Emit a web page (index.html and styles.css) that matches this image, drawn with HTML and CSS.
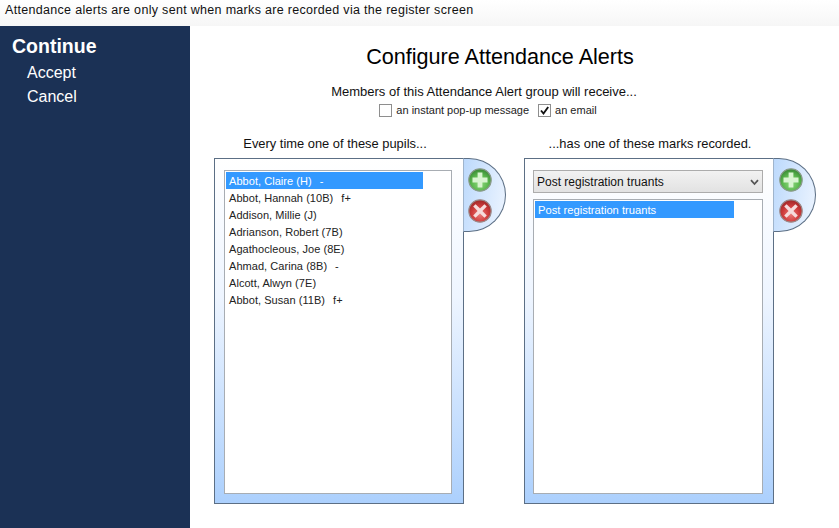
FILE: index.html
```html
<!DOCTYPE html>
<html lang="en">
<head>
<meta charset="utf-8">
<title>Configure Attendance Alerts</title>
<link rel="stylesheet" href="styles.css">
</head>
<body>
<svg class="defs" width="0" height="0" aria-hidden="true">
  <defs>
    <radialGradient id="green" cx="50%" cy="65%" r="60%"><stop offset="0" stop-color="#8fd97f"/><stop offset="0.6" stop-color="#5cb84f"/><stop offset="1" stop-color="#3c8f38"/></radialGradient>
    <radialGradient id="red" cx="50%" cy="65%" r="60%"><stop offset="0" stop-color="#ea7a78"/><stop offset="0.6" stop-color="#cf3d3d"/><stop offset="1" stop-color="#a52a2a"/></radialGradient>
    <symbol id="add" viewBox="0 0 24 24"><circle cx="12" cy="12" r="11.2" fill="url(#green)" stroke="#8a9a8a" stroke-width="1.2"/><path d="M9.6 4.5h4.8v5.1h5.1v4.8h-5.1v5.1H9.6v-5.1H4.5V9.6h5.1z" fill="#d8f4d0"/></symbol>
    <symbol id="remove" viewBox="0 0 24 24"><circle cx="12" cy="12" r="11.2" fill="url(#red)" stroke="#9a8a8a" stroke-width="1.2"/><path d="M7.6 5.2 12 9.6l4.4-4.4 2.4 2.4-4.4 4.4 4.4 4.4-2.4 2.4-4.4-4.4-4.4 4.4-2.4-2.4 4.4-4.4-4.4-4.4z" fill="#f6dcdc"/></symbol>
  </defs>
</svg>
<header class="topbar">Attendance alerts are only sent when marks are recorded via the register screen</header>
<div class="layout">
  <nav class="sidebar">
    <div class="nav-head">Continue</div>
    <div class="nav-item">Accept</div>
    <div class="nav-item">Cancel</div>
  </nav>
  <main class="content">
    <h1 class="title">Configure Attendance Alerts</h1>
    <p class="lead">Members of this Attendance Alert group will receive...</p>
    <div class="options">
      <label class="option"><span class="check"></span>an instant pop-up message</label>
      <label class="option"><span class="check"><svg viewBox="0 0 13 13" width="13" height="13"><path d="M3 6.5 5.5 9.5 10.2 3" fill="none" stroke="#111" stroke-width="1.9"/></svg></span>an email</label>
    </div>
    <div class="columns">
      <section class="column">
        <h2 class="col-head col-head-a">Every time one of these pupils...</h2>
        <div class="panel-wrap">
          <div class="panel">
            <ul class="list">
              <li class="row selected"><span>Abbot, Claire (H)</span><span class="mark">-</span></li>
              <li class="row"><span>Abbot, Hannah (10B)</span><span class="mark">f+</span></li>
              <li class="row"><span>Addison, Millie (J)</span></li>
              <li class="row"><span>Adrianson, Robert (7B)</span></li>
              <li class="row"><span>Agathocleous, Joe (8E)</span></li>
              <li class="row"><span>Ahmad, Carina (8B)</span><span class="mark">-</span></li>
              <li class="row"><span>Alcott, Alwyn (7E)</span></li>
              <li class="row"><span>Abbot, Susan (11B)</span><span class="mark">f+</span></li>
            </ul>
          </div>
          <div class="tab">
            <svg class="btn" width="24" height="24"><use href="#add"/></svg>
            <svg class="btn" width="24" height="24"><use href="#remove"/></svg>
          </div>
        </div>
      </section>
      <section class="column">
        <h2 class="col-head col-head-b">...has one of these marks recorded.</h2>
        <div class="panel-wrap">
          <div class="panel panel-b">
            <div class="select">
              <span>Post registration truants</span>
              <svg width="9" height="7" viewBox="0 0 9 7"><path d="M1 1.2 4.5 5 8 1.2" fill="none" stroke="#555" stroke-width="1.8"/></svg>
            </div>
            <ul class="list list-b">
              <li class="row selected"><span>Post registration truants</span></li>
            </ul>
          </div>
          <div class="tab tab-b">
            <svg class="btn" width="24" height="24"><use href="#add"/></svg>
            <svg class="btn" width="24" height="24"><use href="#remove"/></svg>
          </div>
        </div>
      </section>
    </div>
  </main>
</div>
</body>
</html>
```
FILE: styles.css
```css
* { box-sizing: border-box; }
html, body { margin: 0; height: 100%; }
body {
  width: 839px;
  height: 528px;
  overflow: hidden;
  background: #fff;
  color: #111;
  font-family: "Liberation Sans", Arial, sans-serif;
  display: flex;
  flex-direction: column;
}
.defs { position: absolute; }
.topbar {
  height: 26px;
  flex: none;
  padding: 3px 0 0 5px;
  font-size: 12.5px;
  line-height: 15px;
  letter-spacing: 0.31px;
  background: linear-gradient(#fff, #f6f6f6);
}
.layout { flex: 1; display: flex; min-height: 0; }
.sidebar {
  width: 190px;
  flex: none;
  background: #1b3155;
  color: #fff;
  padding: 9px 0 0 12px;
}
.nav-head { font-size: 19.5px; font-weight: bold; line-height: 23px; margin-bottom: 3px; }
.nav-item { font-size: 16px; line-height: 24px; padding-left: 15px; }
.content { flex: 1; padding: 0 0 0 24px; min-width: 0; }
.title {
  margin: 18px 0 0;
  width: 572px;
  text-align: center;
  font-size: 21.6px;
  font-weight: normal;
  line-height: 26px;
  color: #000;
}
.lead {
  margin: 14px 0 0;
  width: 540px;
  text-align: center;
  font-size: 13px;
  line-height: 15px;
}
.options {
  display: flex;
  gap: 9px;
  justify-content: center;
  width: 548px;
  margin-top: 4px;
  font-size: 11px;
  line-height: 14px;
}
.option { display: flex; align-items: center; gap: 4px; color: #222; }
.check {
  width: 13px;
  height: 13px;
  border: 1px solid #8e8e8e;
  background: #fff;
  display: block;
  position: relative;
}
.check svg { display: block; margin: -1px; }
.columns { display: flex; gap: 18px; margin-top: 19px; }
.column { width: 292px; }
.col-head {
  margin: 0 0 7px;
  font-size: 12.9px;
  font-weight: normal;
  line-height: 15px;
  text-align: center;
}
.col-head-a { width: 242px; }
.col-head-b { width: 252px; }
.panel-wrap { display: flex; align-items: flex-start; }
.panel {
  width: 250px;
  height: 346px;
  flex: none;
  border: 1px solid #5c6f85;
  background: linear-gradient(#fff 0, #eef5ff 40%, #acd0fd 100%);
  padding: 11px 11px 9px 9px;
  display: flex;
  flex-direction: column;
}
.panel-b { padding: 11px 10px 9px 8px; }
.list {
  list-style: none;
  margin: 0;
  padding: 1px;
  flex: 1;
  background: #fff;
  border: 1px solid #a8adb3;
  font-size: 11px;
  letter-spacing: 0.05px;
  color: #222;
}
.list-b { margin-top: 6px; font-size: 11.2px; letter-spacing: 0; }
.row { height: 17px; width: 197px; line-height: 19px; padding-left: 3px; display: flex; gap: 8px; }
.list-b .row { width: 199px; }
.row.selected { background: #3399ff; color: #fff; }
.tab {
  width: 43px;
  height: 74px;
  flex: none;
  margin-left: -1px;
  border: 1px solid #5c6f85;
  border-left: 1px solid #9fb4cc;
  border-radius: 0 37px 37px 0 / 0 37px 37px 0;
  background: linear-gradient(100deg, #bcd9fc, #eef5ff);
  padding: 9px 0 0 4px;
  display: flex;
  flex-direction: column;
  gap: 7px;
}
.tab-b { padding-left: 5px; }
.btn { display: block; flex: none; }
.select {
  height: 23px;
  flex: none;
  border: 1px solid #acacac;
  background: linear-gradient(#f2f2f2, #e2e2e2);
  padding: 1px 3px 0 3px;
  display: flex;
  align-items: center;
  justify-content: space-between;
  font-size: 12px;
  color: #111;
}
```
